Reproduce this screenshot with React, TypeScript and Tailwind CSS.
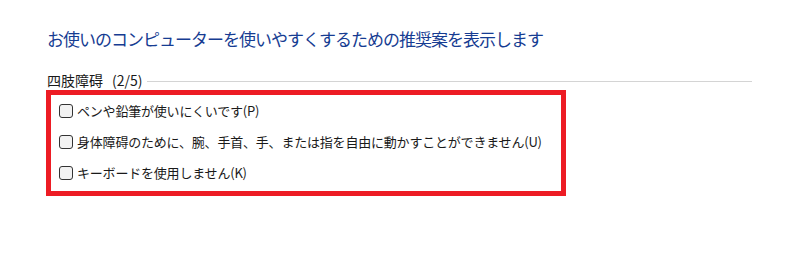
import React from "react";

const items = [
  "ペンや鉛筆が使いにくいです(P)",
  "身体障碍のために、腕、手首、手、または指を自由に動かすことができません(U)",
  "キーボードを使用しません(K)",
];

export default function App() {
  return (
    <div
      className="w-[812px] h-[264px] bg-white pl-[47px] pr-[60px] pt-[27px]"
      style={{ fontFamily: '"Noto Sans CJK JP", "Noto Sans", sans-serif' }}
    >
      <div className="h-[24px] leading-[24px] text-[17px] text-[#163c92] tracking-[-1px] whitespace-nowrap">
        お使いのコンピューターを使いやすくするための推奨案を表示します
      </div>
      <div className="mt-[20px] flex items-center h-[18px]">
        <span className="text-[14px] leading-[18px] text-[#1a1a1a] whitespace-nowrap">
          四肢障碍
          <span className="ml-[9px]">(2/5)</span>
        </span>
        <div className="ml-[4px] flex-1 h-px bg-[#d4d4d4] mt-[2px]" />
      </div>
      <div className="mt-[1px] -ml-px w-[520px] h-[106px] border-[5px] border-[#ed1c24] pl-[8px] flex flex-col">
        {items.map((t) => (
          <div key={t} className="h-[31px] flex items-center">
            <div className="w-[14px] h-[14px] rounded-[3px] border border-[#333333] bg-[#f2f2f2] shrink-0" />
            <span className="ml-[4px] text-[13px] leading-[18px] text-[#1a1a1a] whitespace-nowrap tracking-[-0.2px]">
              {t}
            </span>
          </div>
        ))}
      </div>
    </div>
  );
}
